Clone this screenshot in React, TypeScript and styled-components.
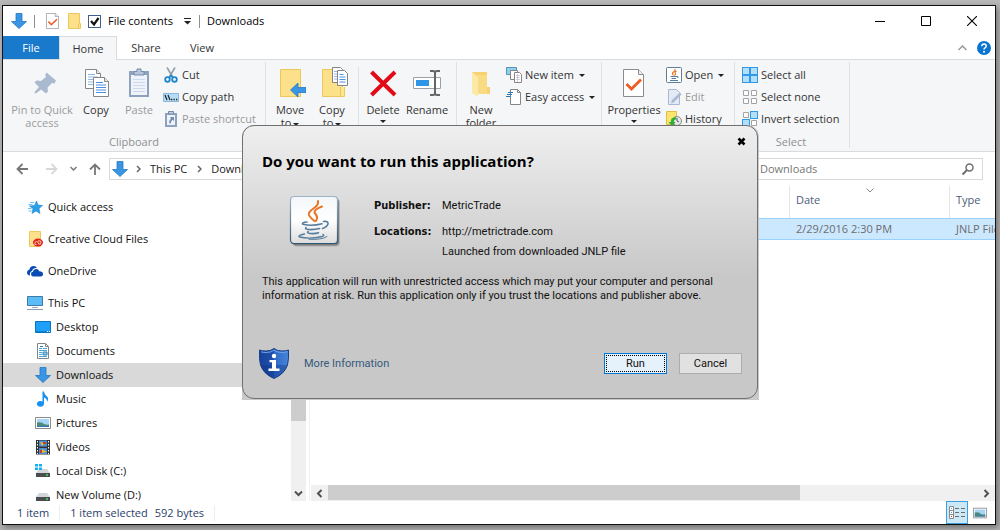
import React from "react";
import styled, { createGlobalStyle } from "styled-components";

const GlobalStyle = createGlobalStyle`
  *, *::before, *::after { box-sizing: border-box; }
  html, body { margin: 0; padding: 0; }
  body {
    background: #b4b4b4;
    font-family: "Open Sans", "Noto Sans", sans-serif;
    font-size: 11px;
    line-height: 16px;
    color: #1a1a1a;
    overflow: hidden;
  }
  button, input { font: inherit; color: inherit; }
  button { border: 0; background: none; padding: 0; margin: 0; }
  svg { display: block; flex: none; }
`;

/* ---------- window ---------- */
const Desktop = styled.div`
  display: flex;
  height: 100vh;
  padding: 5px 4px 5px 2px;
  background: linear-gradient(#b9b9b9, #b0b0b0);
`;
const Window = styled.div`
  flex: 1;
  min-width: 0;
  display: flex;
  flex-direction: column;
  background: #fff;
  border: 1px solid #111;
  box-shadow: 2px 2px 6px rgba(0, 0, 0, 0.4);
`;
const TitleBar = styled.header`
  display: flex;
  align-items: center;
  height: 30px;
  flex: none;
  padding-left: 8px;
`;
const QuickTools = styled.div`
  display: flex;
  align-items: center;
  color: #000;
`;
const ToolSep = styled.span<{ $left: number; $right: number }>`
  width: 1px;
  height: 13px;
  margin: 0 ${(p) => p.$right}px 0 ${(p) => p.$left}px;
  background: #8f8f8f;
`;
const CheckLabel = styled.label`
  display: flex;
  align-items: center;
  gap: 7px;
  margin-left: 7px;
`;
const CheckBox = styled.input`
  appearance: none;
  width: 13px;
  height: 13px;
  margin: 0;
  border: 1px solid #3f5f8f;
  background: #fff url("data:image/svg+xml,%3Csvg xmlns='http://www.w3.org/2000/svg' viewBox='0 0 11 11'%3E%3Cpath d='M2 5l3 3.5L9.500 2' fill='none' stroke='%23111' stroke-width='2.2'/%3E%3C/svg%3E");
`;
const IconButton = styled.button<{ $left?: number }>`
  margin-left: ${(p) => p.$left ?? 0}px;
`;
const WindowButtons = styled.div`
  display: flex;
  margin-left: auto;
`;
const WindowButton = styled.button`
  width: 46px;
  height: 28px;
  display: flex;
  align-items: center;
  justify-content: center;
`;

/* ---------- tabs ---------- */
const TabBar = styled.nav`
  display: flex;
  flex: none;
  height: 24px;
  border-bottom: 1px solid #dadbdc;
`;
const Tab = styled.button<{ $kind?: "file" | "active" }>`
  width: ${(p) => (p.$kind === "active" ? 58 : 56)}px;
  height: ${(p) => (p.$kind === "active" ? 24 : 23)}px;
  margin-right: ${(p) => (p.$kind === "active" ? 1 : 0)}px;
  color: ${(p) => (p.$kind === "file" ? "#fff" : "#333")};
  background: ${(p) =>
    p.$kind === "file" ? "#1979ca" : p.$kind === "active" ? "#f5f6f7" : "none"};
  border: ${(p) => (p.$kind === "active" ? "1px solid #dadbdc" : "0")};
  border-bottom: 0;
`;
const HelpArea = styled.div`
  display: flex;
  align-items: center;
  gap: 10px;
  margin-left: auto;
  padding-right: 4px;
`;

/* ---------- ribbon ---------- */
const Ribbon = styled.div`
  display: flex;
  flex: none;
  height: 92px;
  padding: 2px 0 3px;
  background: #f5f6f7;
  border-bottom: 1px solid #dadbdc;
`;
const Group = styled.section<{ $width: number; $left: number }>`
  display: flex;
  flex-direction: column;
  justify-content: space-between;
  width: ${(p) => p.$width}px;
  padding-left: ${(p) => p.$left}px;
  border-right: 1px solid #e0e1e3;
`;
const GroupRow = styled.div<{ $gap?: number }>`
  display: flex;
  align-items: flex-start;
  gap: ${(p) => p.$gap ?? 0}px;
  padding-top: 2px;
`;
const GroupLabel = styled.div<{ $shift: number }>`
  padding-right: ${(p) => p.$shift}px;
  text-align: center;
  line-height: 12px;
  color: #8f8f8f;
`;
const BigButton = styled.button<{ $width: number; $off?: boolean }>`
  display: flex;
  flex-direction: column;
  align-items: center;
  gap: 4px;
  width: ${(p) => p.$width}px;
  padding-top: 3px;
  line-height: 13px;
  color: ${(p) => (p.$off ? "#9a9a9a" : "#333")};
`;
const SmallColumn = styled.div`
  display: flex;
  flex-direction: column;
`;
const SmallButton = styled.button<{ $off?: boolean }>`
  display: flex;
  align-items: center;
  gap: 3px;
  height: 22px;
  padding-left: 1px;
  white-space: nowrap;
  color: ${(p) => (p.$off ? "#9a9a9a" : "#333")};
`;
const InnerSep = styled.span`
  width: 1px;
  height: 66px;
  margin: 3px 3px 0 5px;
  background: #e0e1e3;
`;
const Caret = styled.span`
  display: inline-block;
  width: 0;
  margin-left: 2px;
  border: 3px solid transparent;
  border-top-color: #222;
  border-bottom: 0;
  vertical-align: middle;
`;
const CaretLine = styled(Caret)`
  display: block;
  margin: 4px auto 0;
`;

/* ---------- navigation row ---------- */
const NavRow = styled.div`
  display: flex;
  align-items: center;
  flex: none;
  height: 34px;
  padding: 0 12px 0 13px;
`;
const NavButtons = styled.div`
  display: flex;
  align-items: center;
  width: 93px;
  gap: 12px;
`;
const Address = styled.div`
  display: flex;
  align-items: center;
  flex: 1;
  height: 22px;
  padding-left: 2px;
  border: 1px solid #d9d9d9;
`;
const Crumb = styled.a`
  margin: 0 10px 0 9px;
  color: #1a1a1a;
  text-decoration: none;
`;
const SearchBox = styled.label`
  display: flex;
  align-items: center;
  width: 246px;
  height: 22px;
  margin-left: 12px;
  padding: 0 7px 0 22px;
  border: 1px solid #d9d9d9;
`;
const SearchInput = styled.input`
  flex: 1;
  min-width: 0;
  padding: 0;
  border: 0;
  outline: 0;
  background: none;
  &::placeholder { color: #767676; opacity: 1; }
`;

/* ---------- body ---------- */
const Body = styled.div`
  display: flex;
  flex: 1;
  min-height: 0;
`;
const Sidebar = styled.aside`
  display: flex;
  width: 307px;
  border-right: 1px solid #f0f0f0;
  padding-right: 3px;
`;
const Tree = styled.ul`
  flex: 1;
  margin: 0;
  padding: 9px 0 0;
  list-style: none;
  overflow: hidden;
`;
const TreeItem = styled.li<{ $child?: boolean; $active?: boolean }>`
  height: 24px;
  margin-bottom: ${(p) => (p.$child ? 0 : 8)}px;
  background: ${(p) => (p.$active ? "#d9d9d9" : "none")};
  &:has(+ li[data-child="true"]) { margin-bottom: 0; }
`;
const TreeLink = styled.a<{ $child?: boolean }>`
  display: flex;
  align-items: center;
  gap: 5px;
  height: 24px;
  padding-left: ${(p) => (p.$child ? 32 : 24)}px;
  color: #111;
  text-decoration: none;
`;
const VScroll = styled.div`
  display: flex;
  flex-direction: column;
  align-items: center;
  justify-content: flex-end;
  width: 15px;
  background: #f0f0f0;
`;
const VThumb = styled.div`
  align-self: stretch;
  height: 160px;
  margin-bottom: 64px;
  background: #cdcdcd;
`;
const VArrow = styled.button`
  height: 16px;
`;
const Content = styled.main`
  display: flex;
  flex-direction: column;
  justify-content: space-between;
  flex: 1;
  min-width: 0;
  padding-left: 1px;
`;
const FileTable = styled.table`
  width: 100%;
  table-layout: fixed;
  border-collapse: separate;
  border-spacing: 0;
  color: #6d6d6d;
`;
const HeadCell = styled.th<{ $width?: number }>`
  position: relative;
  width: ${(p) => (p.$width ? `${p.$width}px` : "auto")};
  height: 32px;
  padding: 0 0 4px 6px;
  font-weight: 400;
  text-align: left;
  color: #4c607a;
  border-left: ${(p) => (p.$width ? "1px solid #e5e5e5" : "0")};
`;
const SortMark = styled.span`
  position: absolute;
  top: 2px;
  left: 50%;
  margin-left: -4px;
`;
const Cell = styled.td`
  height: 22px;
  padding: 0 0 0 7px;
  background: #cce8ff;
  border: 1px solid #99d1ff;
  border-width: 1px 0;
  white-space: nowrap;
  overflow: hidden;
`;
const HScroll = styled.div`
  display: flex;
  align-items: center;
  height: 16px;
  padding: 0 5px;
  background: #f0f0f0;
`;
const HThumb = styled.div`
  width: 70%;
  height: 15px;
  margin: 0 auto 1px 5px;
  background: #cdcdcd;
`;
const StatusBar = styled.footer`
  display: flex;
  align-items: center;
  flex: none;
  height: 23px;
  padding-left: 14px;
  color: #2c3e6b;
`;
const StatusText = styled.span<{ $sep?: boolean }>`
  padding-right: ${(p) => (p.$sep ? 10 : 7)}px;
  margin-right: ${(p) => (p.$sep ? 10 : 0)}px;
  border-right: ${(p) => (p.$sep ? "1px solid #ededed" : "0")};
`;
const ViewButton = styled.button<{ $active?: boolean }>`
  display: flex;
  align-items: center;
  justify-content: center;
  width: 22px;
  height: 23px;
  margin-right: 1px;
  background: ${(p) => (p.$active ? "#cce8f6" : "none")};
  border: 1px solid ${(p) => (p.$active ? "#3a9fdc" : "transparent")};
`;
const ViewButtons = styled.div`
  display: flex;
  margin-left: auto;
  padding-right: 3px;
`;

/* ---------- dialog ---------- */
const DialogFrame = styled.div`
  position: absolute;
  top: 125px;
  left: 242px;
  width: 517px;
  padding: 0 1px 1px 0;
  background: #c9c9c9;
  border-radius: 12px 12px 0 0;
`;
const Dialog = styled.section`
  display: flex;
  flex-direction: column;
  height: 274px;
  padding: 9px 15px 19px 16px;
  border: 1px solid #707070;
  border-radius: 12px;
  background: linear-gradient(#efefef, #c8c8c8 150px);
  color: #111;
  font-family: Roboto, "Open Sans", sans-serif;
  line-height: 14px;
`;
const CloseDialog = styled.button`
  align-self: flex-end;
  margin-right: -6px;
  padding: 2px;
`;
const DialogTitle = styled.h1`
  margin: 2px 0 0 3px;
  font-family: "Open Sans", sans-serif;
  font-size: 15px;
  line-height: 22px;
  font-weight: 700;
  color: #000;
`;
const AppInfo = styled.div`
  display: flex;
  gap: 36px;
  margin: 24px 0 0 31px;
`;
const Facts = styled.dl`
  display: grid;
  grid-template-columns: 68px auto;
  grid-template-rows: 26px 20px 20px;
  margin: 3px 0 0;
`;
const Term = styled.dt`
  font-family: "DejaVu Sans Condensed", "Open Sans", sans-serif;
  font-weight: 700;
  white-space: nowrap;
`;
const Value = styled.dd`
  margin: 0;
  grid-column: 2;
`;
const Warning = styled.p`
  margin: 10px 0 0 3px;
  white-space: nowrap;
`;
const DialogFooter = styled.div`
  display: flex;
  align-items: center;
  margin-top: auto;
`;
const MoreLink = styled.a`
  margin-left: 15px;
  margin-right: auto;
  color: #35587c;
  text-decoration: none;
`;
const DialogButton = styled.button<{ $primary?: boolean }>`
  width: 63px;
  height: 21px;
  margin-left: ${(p) => (p.$primary ? 0 : 12)}px;
  background: ${(p) => (p.$primary ? "#e5f1fb" : "#e1e1e1")};
  border: 1px solid ${(p) => (p.$primary ? "#0078d7" : "#adadad")};
  outline: ${(p) => (p.$primary ? "1px dotted #000" : "none")};
  outline-offset: -3px;
`;

/* ---------- icons ---------- */
const DownArrow = () => (
  <svg width="16" height="16" viewBox="0 0 16 16">
    <path d="M5 .5h6v8h4.500L8 15.500.5 8.500H5z" fill="#3a95e4" stroke="#2478c2" strokeWidth=".8" />
  </svg>
);
const CheckPage = ({ w = 13, h = 16 }: { w?: number; h?: number }) => (
  <svg width={w} height={h} viewBox="0 0 22 28" preserveAspectRatio="none">
    <path d="M.7.700h15L21.300 6v21.300H.7z" fill="#fff" stroke="#8b8b8b" strokeWidth="1.200" />
    <path d="M15.500.7V6.200h5.800" fill="#eee" stroke="#8b8b8b" />
    <path d="M4 15l5 5.500 9.500-9.500" fill="none" stroke="#f15a22" strokeWidth="2.800" />
  </svg>
);
const PropertiesIcon = () => (
  <svg width="32" height="32" viewBox="0 0 32 32">
    <path d="M5.500 2.500h15l5 5v22h-20z" fill="#fff" stroke="#8b8b8b" />
    <path d="M20.500 2.500v5h5" fill="#eee" stroke="#8b8b8b" />
    <path d="M8.500 17l5 5 9.500-9.500" fill="none" stroke="#f15a22" strokeWidth="2.800" />
  </svg>
);
const FolderShape = ({ w, h }: { w: number; h: number }) => (
  <svg width={w} height={h} viewBox="0 0 13 16" preserveAspectRatio="none">
    <path d="M.5.500h11v10h1v5H.5z" fill="#fce08a" stroke="#ecc85c" />
    <path d="M10.500 10.500v5" stroke="#ecc85c" />
  </svg>
);
const PinIcon = () => (
  <svg width="32" height="32" viewBox="0 0 32 32">
    <path d="M20.500 5.500L30 13.500l-1.500 3-2.500-.5-4.500 4.500.5 4-2 2-5-4-4.500 3.500-2 .5.500-2 4-4.500L8.500 15.500l2-2 4.500.5 5-4-.8-2z" fill="#a9b9cf" />
  </svg>
);
const Sheet = ({ x, y, c = "#4a90e2" }: { x: number; y: number; c?: string }) => (
  <g transform={`translate(${x} ${y})`}>
    <path d="M.5.500h11l4 4v15H.5z" fill="#fff" stroke="#858585" />
    <path d="M11.500.5v4h4" fill="#eee" stroke="#858585" />
    <path d="M3 5.500h7M3 8h10M3 10.500h10M3 13h10M3 15.500h10" stroke={c} />
  </g>
);
const CopyIcon = () => (
  <svg width="32" height="32" viewBox="0 0 32 32">
    <Sheet x={5} y={2} c="#8fb8ea" />
    <Sheet x={13} y={10} />
  </svg>
);
const PasteIcon = () => (
  <svg width="32" height="32" viewBox="0 0 32 32">
    <path d="M6 4h20v26H6z" fill="#8ea2c0" />
    <path d="M8 8h16v20H8z" fill="#f0f4fa" />
    <path d="M11 4.500h3V2h4v2.500h3V8H11z" fill="#b8c6da" stroke="#7489ab" />
    <path d="M10 12.500h12M10 15.500h12M10 18.500h12M10 21.500h12M10 24.500h12" stroke="#ccd9ec" />
  </svg>
);
const CutIcon = () => (
  <svg width="16" height="16" viewBox="0 0 16 16" fill="none">
    <path d="M4 .5l6 10M12 .5L6 10.500" stroke="#93a0ab" strokeWidth="1.600" />
    <circle cx="4.500" cy="12.500" r="2.300" stroke="#1b86cf" strokeWidth="1.800" />
    <circle cx="11.500" cy="12.500" r="2.300" stroke="#1b86cf" strokeWidth="1.800" />
    <path d="M6 11l2-2.500 2 2.500" stroke="#1b86cf" strokeWidth="1.500" />
  </svg>
);
const PathIcon = () => (
  <svg width="16" height="16" viewBox="0 0 16 16">
    <path d="M.5 4.500h15v8H.5z" fill="#b4dcfa" stroke="#8ab8dc" />
    <path d="M2 6l2 5M5 6l2 5" stroke="#222" strokeWidth="1.200" />
    <path d="M8 10.500h1.300M10.500 10.500h1.300M13 10.500h1.300" stroke="#222" strokeWidth="1.300" />
  </svg>
);
const ShortcutIcon = () => (
  <svg width="16" height="16" viewBox="0 0 16 16">
    <path d="M2 2h12v14H2z" fill="#8ea2c0" />
    <path d="M4 4h8v10H4z" fill="#eef3fa" />
    <path d="M5.500.5h5V3h-5z" fill="#c3cfe0" stroke="#7489ab" />
    <path d="M7 6h4v4L9.500 8.800Q8 10 7.500 12.500L6 12q0-3 2-4.500z" fill="#7489ab" />
  </svg>
);
const MoveIcon = () => (
  <svg width="32" height="32" viewBox="0 0 32 32">
    <path d="M6.500 2.500h20v27h-20z" fill="#fce08a" stroke="#ecc85c" />
    <path d="M23.500 20v9.500h3V20" fill="#fce694" stroke="#ecc85c" />
    <path d="M16.500 23l7.500-7v4.500h8v5h-8V30z" fill="#3a95e4" stroke="#2478c2" strokeWidth=".8" />
  </svg>
);
const CopyToIcon = () => (
  <svg width="32" height="32" viewBox="0 0 32 32">
    <path d="M6.500 2.500h20v27h-20z" fill="#fce08a" stroke="#ecc85c" />
    <path d="M24.500 20v9.500h4V20" fill="#fce694" stroke="#ecc85c" />
    <g transform="translate(16 0)">
      <path d="M.5.500h8l2 2v13H.5z" fill="#fff" stroke="#858585" />
      <path d="M2 4.500h5M2 7h5M2 9.500h5M2 12h5" stroke="#8fb8ea" />
      <path d="M5.500 3.500h7l3 3v12h-10z" fill="#fff" stroke="#858585" />
      <path d="M7.500 7.500h4M7.500 10h6M7.500 12.500h6M7.500 15h6" stroke="#4a90e2" />
    </g>
  </svg>
);
const DeleteIcon = () => (
  <svg width="32" height="32" viewBox="0 0 32 32">
    <path d="M4.500 5l23.500 23M28 5L4.500 28" stroke="#e20a16" strokeWidth="4" />
  </svg>
);
const RenameIcon = () => (
  <svg width="32" height="32" viewBox="0 0 32 32" fill="none">
    <path d="M2.500 10.500h27v11h-27z" fill="#fff" stroke="#9aa0a6" />
    <path d="M5 13h13v6H5z" fill="#3095e4" />
    <path d="M19 4h3q2 0 2 2 0-2 2-2h3M19 28h3q2 0 2-2 0 2 2 2h3M24 6v20" stroke="#666" strokeWidth="2" />
  </svg>
);
const NewFolderIcon = () => (
  <svg width="32" height="32" viewBox="0 0 32 32">
    <path d="M7 5h15v15h3v7H9L7 26z" fill="#f6d272" />
    <path d="M12 8h10v19H12z" fill="#f8db82" />
    <path d="M7 5l6 5v20l-6-4z" fill="#fde9a6" />
  </svg>
);
const NewItemIcon = () => (
  <svg width="16" height="16" viewBox="0 0 16 16">
    <path d="M.5.500h10v7H.5z" fill="#8fd0ee" stroke="#5a93b0" />
    <path d="M4.500 3.500h7v9h-7z" fill="#fff" stroke="#858585" />
    <path d="M8.500 5.500h5l2 2v8h-7z" fill="#fff" stroke="#858585" />
    <path d="M10 8.500h4M10 10.500h4M10 12.500h4" stroke="#c5d5ec" />
    <path d="M11.500 7v8" stroke="#f29b9b" strokeWidth=".6" />
  </svg>
);
const EasyIcon = () => (
  <svg width="16" height="16" viewBox="0 0 16 16">
    <path d="M4.500.500h7l3 3v12h-10z" fill="#fff" stroke="#858585" />
    <path d="M11.500.5v3h3" fill="none" stroke="#858585" />
    <path d="M2 3.500h5M1 5.500h5M0 7.500h5" stroke="#2878b8" />
  </svg>
);
const JavaGlyph = () => (
  <g fill="none" strokeLinecap="round">
    <path d="M28 5Q29 9 23.500 12.500 18 16 19 19 20 21.500 24.500 25" stroke="#ea7322" strokeWidth="2" />
    <path d="M32 10.500Q24 13.500 24.500 16.500 27.500 20 27 22.500L26 25" stroke="#ea7322" strokeWidth="2" />
    <path d="M17 26Q11 26.500 13 28.300 22 30.500 32 27.800" stroke="#557d9d" strokeWidth="1.600" />
    <path d="M33.500 25.500Q38.500 24.800 38 28 37 31 32.500 32.500" stroke="#557d9d" strokeWidth="1.600" />
    <path d="M16 31.500Q14.500 33 18 33.500 24 34 29.500 32.500" stroke="#557d9d" strokeWidth="1.600" />
    <path d="M18 35.500Q16.500 37 20 37.500 25 38 28.500 36.800" stroke="#557d9d" strokeWidth="1.600" />
    <path d="M14.500 38Q7 39.500 9.500 41 20 43.500 32 40.500 35 39.500 33 38.500" stroke="#557d9d" strokeWidth="1.400" />
    <path d="M19 43.300Q32 44 37 40.500" stroke="#557d9d" strokeWidth="1" />
  </g>
);
const JavaTile = () => (
  <svg width="48" height="48" viewBox="0 0 48 48" overflow="visible">
    <defs>
      <linearGradient id="tile" x2="0" y2="1">
        <stop offset="0" stopColor="#f3f6f9" />
        <stop offset=".5" stopColor="#fff" />
        <stop offset="1" stopColor="#dcdcdc" />
      </linearGradient>
      <linearGradient id="tileEdge" x2="0" y2="1">
        <stop offset="0" stopColor="#9db4c8" />
        <stop offset="1" stopColor="#2f5673" />
      </linearGradient>
    </defs>
    <rect x="3" y="3" width="47" height="47.500" rx="4" fill="#000" opacity=".15" />
    <rect x="2" y="2" width="47" height="47.500" rx="4" fill="#000" opacity=".3" />
    <rect x=".5" y=".5" width="47" height="47" rx="3.500" fill="url(#tile)" stroke="url(#tileEdge)" strokeWidth="1.200" />
    <JavaGlyph />
  </svg>
);
const JavaSmall = () => (
  <svg width="16" height="16" viewBox="0 0 16 16" fill="none">
    <rect x=".5" y=".5" width="15" height="15" rx="1" fill="#fff" stroke="#5f7f98" />
    <path d="M9 2Q9.500 4 7.500 5T7.500 8.500M10.500 4Q8.500 5 9.300 6.200T8.500 8.500" stroke="#ea7322" strokeWidth="1.200" />
    <path d="M4.500 9.500h6.500q2 0 .5 1.500M5.500 11.500h4.500M4 13.500h8" stroke="#557d9d" />
  </svg>
);
const EditIcon = () => (
  <svg width="16" height="16" viewBox="0 0 16 16">
    <path d="M2.500.500h8l3 3v12h-11z" fill="#e3eaf5" stroke="#a9b8d0" />
    <path d="M5 14.500l1-3.500 8-7.500 1.500 2-8 8z" fill="#a9b9d2" />
  </svg>
);
const HistoryIcon = () => (
  <svg width="16" height="16" viewBox="0 0 16 16">
    <path d="M.5.500h10v13H.5z" fill="#fce56c" stroke="#e3bd44" />
    <circle cx="11" cy="10" r="4.500" fill="#e8e8e8" stroke="#8a8a8a" />
    <path d="M11 7v3l2 1" fill="none" stroke="#555" />
    <path d="M10 6Q4 6.500 5 11H2.500L6.500 15.500 9.500 11H8q-.5-2 2-2.500z" fill="#2fae3a" />
  </svg>
);
const SelectIcon = ({ on }: { on: number[] }) => (
  <svg width="16" height="16" viewBox="0 0 16 16">
    {[[0, 0], [8, 0], [0, 8], [8, 8]].map(([x, y], i) =>
      on.includes(i) ? (
        <g key={i}>
          <path d={`M${x} ${y}h8v8h-8z`} fill="#3298e8" />
          <path d={`M${x + 1} ${y + 1}h6v6h-6z`} fill="#b4dffb" />
        </g>
      ) : (
        <path key={i} d={`M${x + 1.5} ${y + 1.5}h5v5h-5z`} fill="#fff" stroke="#a3a3a3" />
      )
    )}
  </svg>
);
const HelpIcon = () => (
  <svg width="14" height="14" viewBox="0 0 14 14">
    <circle cx="7" cy="7" r="7" fill="#0b74d1" />
    <path d="M4.800 5.300q0-2.200 2.200-2.200t2.200 1.900q0 1.200-1.200 1.800-1 .6-1 1.600" fill="none" stroke="#fff" strokeWidth="1.500" />
    <circle cx="7" cy="10.700" r="1" fill="#fff" />
  </svg>
);
const Chevron = ({ d, c = "#666", s = 1.5, w = 8, h = 8 }: { d: string; c?: string; s?: number; w?: number; h?: number }) => (
  <svg width={w} height={h} viewBox={`0 0 ${w} ${h}`}>
    <path d={d} fill="none" stroke={c} strokeWidth={s} />
  </svg>
);
const StarIcon = () => (
  <svg width="16" height="16" viewBox="0 0 16 16">
    <path d="M9.500 2l1.500 4 4.500.5-3.500 3 1 5-4-2.500L5 14.500l1-5L2.500 7l5-.5z" fill="#2aa0e8" stroke="#1b86cf" strokeWidth=".6" />
    <path d="M3 3.500h4M1.500 5.500h4M1 9.500h3.500M1.500 12h3" stroke="#69bdf0" />
  </svg>
);
const CloudFolderIcon = () => (
  <svg width="16" height="16" viewBox="0 0 16 16">
    <path d="M2.500.500h11v15h-11z" fill="#fce08a" stroke="#ecc85c" />
    <ellipse cx="11" cy="11.500" rx="5" ry="4" fill="#e0251b" />
    <path d="M8 12.500q0-2 1.500-2t2.500 2.500M9.500 13.500q-2 .5-2-1M11 10q3-1 3 1.500t-2.500 1.500" fill="none" stroke="#fce0c8" strokeWidth=".9" />
  </svg>
);
const OneDriveIcon = () => (
  <svg width="16" height="16" viewBox="0 0 16 16">
    <path d="M3 12.500Q0 12 0 9.500t2.500-3Q3 3 6.500 3q2.500 0 3.500 2-4-.5-5 3-2.500.5-2 4.500z" fill="#0a4bb3" />
    <path d="M6 13.500q-2-.3-2-2.500t2-2.300Q6.500 6 9.300 6q2.200 0 3 2.300 3.700.2 3.700 2.700t-2.500 2.500z" fill="#0a4bb3" />
  </svg>
);
const PcIcon = () => (
  <svg width="16" height="16" viewBox="0 0 16 16">
    <path d="M.5 1.500h15v9H.5z" fill="#5cbcf5" stroke="#3f7ba5" />
    <path d="M5 12.500h6" stroke="#9ab" />
    <path d="M0 14.500h16" stroke="#8a9aa8" />
  </svg>
);
const DesktopIcon = () => (
  <svg width="16" height="16" viewBox="0 0 16 16">
    <path d="M.5 2.500h15v11H.5z" fill="#1ea0fa" stroke="#0b74c0" />
    <path d="M1 12.500h11" stroke="#0b84d8" />
    <path d="M12 12.500h1m1 0h1" stroke="#fff" />
  </svg>
);
const DocIcon = () => (
  <svg width="16" height="16" viewBox="0 0 16 16">
    <path d="M2.500.500h8l3 3v12h-11z" fill="#fff" stroke="#858585" />
    <path d="M10.500.5v3h3" fill="none" stroke="#858585" />
    <path d="M4 5.500h3M8 5.500h4M4 7.500h8M4 9.500h3M4 11.500h3M4 13.500h8" stroke="#4aa5d8" />
    <path d="M5 3.500h3M8 9h4v3H8z" stroke="#3584b0" fill="#8ec6e6" />
  </svg>
);
const MusicIcon = () => (
  <svg width="16" height="16" viewBox="0 0 16 16">
    <path d="M7.500.500H9q.3 3 2.500 4.500 3 2.500.5 6 .3-3.500-3-4.500v6.200q-.3 3-3.500 3T2 13t3.300-3q1.200 0 2.200.5z" fill="#1592ee" />
  </svg>
);
const PictureIcon = ({ w = 16 }: { w?: number }) => (
  <svg width={w} height={w} viewBox="0 0 16 16">
    <path d="M.5 2.500h15v11H.5z" fill="#fff" stroke="#8b8b8b" />
    <path d="M2 4h12v8H2z" fill="#a8d4f5" />
    <path d="M2 7.500q5-1 7 1.500 3 1 5 .5V12H2z" fill="#4d8a7c" />
    <path d="M2 11h12v1H2z" fill="#3b75ad" />
  </svg>
);
const VideoIcon = () => (
  <svg width="16" height="16" viewBox="0 0 16 16">
    <path d="M1 1h14v14.500H1z" fill="#333" />
    <path d="M4 1.500h8v6H4zM4 9h8v6H4z" fill="#4a8fd6" />
    <path d="M5 3l5 1-3 3zM7 10l5 3-6 1z" fill="#e8b93a" />
    <path d="M8 3h3v2H8zM5 11h2v3H5z" fill="#b8412a" />
    <path d="M2.500 2v13M13.500 2v13" stroke="#fff" strokeDasharray="1.500 1.500" />
  </svg>
);
const DiskIcon = ({ win }: { win?: boolean }) => (
  <svg width="16" height="16" viewBox="0 0 16 16">
    <path d="M4 6h8l3 4H1z" fill="#d3d6d9" />
    <path d="M1 10h14v4H1z" fill="#4a4d50" />
    <path d="M11 12h2" stroke="#4ee04e" strokeWidth="1.500" />
    {win && <path d="M0 1h3v2.500H0zM4 1h3v2.500H4zM0 4.500h3V7H0zM4 4.500h3V7H4z" fill="#12b0f0" />}
  </svg>
);
const SearchIcon = () => (
  <svg width="14" height="14" viewBox="0 0 14 14" fill="none" stroke="#6f6f6f">
    <circle cx="8.500" cy="5.500" r="3.500" strokeWidth="1.500" />
    <path d="M6 8L1.500 12.500" strokeWidth="2" />
  </svg>
);
const ShieldIcon = () => (
  <svg width="30" height="31" viewBox="0 0 30 31">
    <defs>
      <linearGradient id="shield" x2="1" y2="0">
        <stop offset="0" stopColor="#17429a" />
        <stop offset=".5" stopColor="#1f50ae" />
        <stop offset=".5" stopColor="#2f68c6" />
        <stop offset="1" stopColor="#4585da" />
      </linearGradient>
    </defs>
    <path d="M15 .5Q12 3 7 3 3 3 .5 2q-.5 9 1 15 3 9 13.500 13.500Q25.500 26 28.500 17q1.500-6 1-15-2.500 1-6.500 1-5 0-8-2.500z" fill="url(#shield)" stroke="#1a3f86" />
    <path d="M1.500 17h27Q25.500 26 15 30 4.500 26 1.500 17z" fill="#0f3484" opacity=".4" />
    <path d="M15 2.200Q12 4.500 7 4.500q-3 0-5-.7M15 2.200q3 2.300 8 2.300 3 0 5-.7" fill="none" stroke="#6fa5ec" strokeWidth="1" />
    <circle cx="15" cy="8" r="2.200" fill="#fff" />
    <path d="M10.500 12H17v8.500h3.500v2.500h-11v-2.500H13V14.300h-2.500z" fill="#fff" />
  </svg>
);
const DetailsIcon = () => (
  <svg width="16" height="13" viewBox="0 0 16 13" fill="none">
    <path d="M.5.500h4v12h-4zM.5 4.500h4M.5 8.500h4" fill="#fff" stroke="#8a8a8a" />
    <path d="M2 2.500h1M2 6.500h1" stroke="#4aa5d8" />
    <path d="M2 10.500h1" stroke="#d22" />
    <path d="M6 2.500h4M12 2.500h4M6 6.500h4M12 6.500h4M6 10.500h4M12 10.500h4" stroke="#6d6d6d" />
  </svg>
);

const tree: { label: string; icon: React.ReactNode; child?: boolean; active?: boolean }[] = [
  { label: "Quick access", icon: <StarIcon /> },
  { label: "Creative Cloud Files", icon: <CloudFolderIcon /> },
  { label: "OneDrive", icon: <OneDriveIcon /> },
  { label: "This PC", icon: <PcIcon /> },
  { label: "Desktop", icon: <DesktopIcon />, child: true },
  { label: "Documents", icon: <DocIcon />, child: true },
  { label: "Downloads", icon: <DownArrow />, child: true, active: true },
  { label: "Music", icon: <MusicIcon />, child: true },
  { label: "Pictures", icon: <PictureIcon />, child: true },
  { label: "Videos", icon: <VideoIcon />, child: true },
  { label: "Local Disk (C:)", icon: <DiskIcon win />, child: true },
  { label: "New Volume (D:)", icon: <DiskIcon />, child: true },
];

export default function App() {
  return (
    <Desktop>
      <GlobalStyle />
      <Window>
        <TitleBar>
          <QuickTools>
            <DownArrow />
            <ToolSep $left={7} $right={11} />
            <IconButton aria-label="Properties"><CheckPage /></IconButton>
            <IconButton $left={9} aria-label="New folder"><FolderShape w={13} h={16} /></IconButton>
            <CheckLabel>
              <CheckBox type="checkbox" defaultChecked />
              File contents
            </CheckLabel>
            <IconButton $left={11} aria-label="Customize toolbar">
              <svg width="7" height="7" viewBox="0 0 7 7"><path d="M0 .5h7" stroke="#222" /><path d="M0 3h7L3.500 6.500z" fill="#222" /></svg>
            </IconButton>
            <ToolSep $left={8} $right={7} />
            <span>Downloads</span>
          </QuickTools>
          <WindowButtons>
            <WindowButton aria-label="Minimize"><Chevron w={10} h={10} d="M0 5.500h10" c="#000" s={1} /></WindowButton>
            <WindowButton aria-label="Maximize"><Chevron w={10} h={10} d="M.5.500h9v9h-9z" c="#000" s={1} /></WindowButton>
            <WindowButton aria-label="Close"><Chevron w={10} h={10} d="M0 0l10 10M10 0L0 10" c="#000" s={1.1} /></WindowButton>
          </WindowButtons>
        </TitleBar>

        <TabBar>
          <Tab $kind="file">File</Tab>
          <Tab $kind="active">Home</Tab>
          <Tab>Share</Tab>
          <Tab>View</Tab>
          <HelpArea>
            <IconButton aria-label="Collapse ribbon"><Chevron w={9} h={6} d="M.5 5L4.500 1l4 4" c="#999" /></IconButton>
            <IconButton aria-label="Help"><HelpIcon /></IconButton>
          </HelpArea>
        </TabBar>

        <Ribbon>
          <Group $width={263} $left={8}>
            <GroupRow $gap={3}>
              <BigButton $width={62} $off><PinIcon /><span>Pin to Quick<br />access</span></BigButton>
              <BigButton $width={40}><CopyIcon />Copy</BigButton>
              <BigButton $width={40} $off><PasteIcon />Paste</BigButton>
              <SmallColumn>
                <SmallButton><CutIcon />Cut</SmallButton>
                <SmallButton><PathIcon />Copy path</SmallButton>
                <SmallButton $off><ShortcutIcon />Paste shortcut</SmallButton>
              </SmallColumn>
            </GroupRow>
            <GroupLabel $shift={8}>Clipboard</GroupLabel>
          </Group>
          <Group $width={191} $left={3}>
            <GroupRow>
              <BigButton $width={42}><MoveIcon /><span>Move<br />to<Caret /></span></BigButton>
              <BigButton $width={42}><CopyToIcon /><span>Copy<br />to<Caret /></span></BigButton>
              <InnerSep />
              <BigButton $width={42}><DeleteIcon /><span>Delete<CaretLine /></span></BigButton>
              <BigButton $width={46}><RenameIcon />Rename</BigButton>
            </GroupRow>
          </Group>
          <Group $width={145} $left={3}>
            <GroupRow $gap={3}>
              <BigButton $width={42}><NewFolderIcon /><span>New<br />folder</span></BigButton>
              <SmallColumn>
                <SmallButton><NewItemIcon />New item<Caret /></SmallButton>
                <SmallButton><EasyIcon />Easy access<Caret /></SmallButton>
              </SmallColumn>
            </GroupRow>
          </Group>
          <Group $width={133} $left={2}>
            <GroupRow $gap={1}>
              <BigButton $width={60}><PropertiesIcon /><span>Properties<CaretLine /></span></BigButton>
              <SmallColumn>
                <SmallButton><JavaSmall />Open<Caret /></SmallButton>
                <SmallButton $off><EditIcon />Edit</SmallButton>
                <SmallButton><HistoryIcon />History</SmallButton>
              </SmallColumn>
            </GroupRow>
          </Group>
          <Group $width={115} $left={6}>
            <GroupRow>
              <SmallColumn>
                <SmallButton><SelectIcon on={[0, 1, 2, 3]} />Select all</SmallButton>
                <SmallButton><SelectIcon on={[]} />Select none</SmallButton>
                <SmallButton><SelectIcon on={[1, 2]} />Invert selection</SmallButton>
              </SmallColumn>
            </GroupRow>
            <GroupLabel $shift={8}>Select</GroupLabel>
          </Group>
        </Ribbon>

        <NavRow>
          <NavButtons>
            <IconButton aria-label="Back"><Chevron w={13} h={12} d="M6.500 1L1.500 6l5 5M1.500 6H12" c="#777" s={1.8} /></IconButton>
            <IconButton $left={4} aria-label="Forward"><Chevron w={13} h={12} d="M6.500 1l5 5-5 5M11.500 6H1" c="#d8d8d8" s={1.8} /></IconButton>
            <IconButton aria-label="Recent locations"><Chevron w={7} h={6} d="M.5 1l3 3 3-3" c="#777" /></IconButton>
            <IconButton aria-label="Up"><Chevron w={12} h={13} d="M1 6.500l5-5 5 5M6 1.500V12" c="#777" s={1.8} /></IconButton>
          </NavButtons>
          <Address>
            <DownArrow />
            <IconButton $left={8} aria-label="Expand"><Chevron w={5} h={8} d="M1 1l3 3-3 3" /></IconButton>
            <Crumb href="#pc">This PC</Crumb>
            <IconButton aria-label="Expand This PC"><Chevron w={5} h={8} d="M1 1l3 3-3 3" /></IconButton>
            <Crumb href="#downloads">Downloads</Crumb>
          </Address>
          <SearchBox>
            <SearchInput type="search" placeholder="Downloads" aria-label="Downloads" />
            <SearchIcon />
          </SearchBox>
        </NavRow>

        <Body>
          <Sidebar>
            <Tree>
              {tree.map((t) => (
                <TreeItem key={t.label} $child={t.child} $active={t.active} data-child={t.child}>
                  <TreeLink href="#" $child={t.child}>{t.icon}{t.label}</TreeLink>
                </TreeItem>
              ))}
            </Tree>
            <VScroll>
              <VThumb />
              <VArrow aria-label="Scroll down"><Chevron w={9} h={7} d="M1 1.500l3.500 3.500L8 1.500" c="#505050" s={2} /></VArrow>
            </VScroll>
          </Sidebar>
          <Content>
            <FileTable>
              <thead>
                <tr>
                  <HeadCell />
                  <HeadCell $width={160}>
                    Date
                    <SortMark><Chevron w={8} h={5} d="M.5.500l3.500 3.500L7.500.5" c="#888" s={1} /></SortMark>
                  </HeadCell>
                  <HeadCell $width={46}>Type</HeadCell>
                </tr>
              </thead>
              <tbody>
                <tr>
                  <Cell />
                  <Cell>2/29/2016 2:30 PM</Cell>
                  <Cell>JNLP File</Cell>
                </tr>
              </tbody>
            </FileTable>
            <HScroll>
              <IconButton aria-label="Scroll left"><Chevron w={7} h={9} d="M5.500 1L2 4.500 5.500 8" c="#505050" s={2} /></IconButton>
              <HThumb />
              <IconButton aria-label="Scroll right"><Chevron w={7} h={9} d="M1.500 1L5 4.500 1.500 8" c="#505050" s={2} /></IconButton>
            </HScroll>
          </Content>
        </Body>

        <StatusBar>
          <StatusText $sep>1 item</StatusText>
          <StatusText>1 item selected</StatusText>
          <StatusText $sep>592 bytes</StatusText>
          <ViewButtons>
            <ViewButton $active aria-label="Details view"><DetailsIcon /></ViewButton>
            <ViewButton aria-label="Thumbnail view"><PictureIcon w={14} /></ViewButton>
          </ViewButtons>
        </StatusBar>
      </Window>

      <DialogFrame role="dialog" aria-labelledby="dialog-title">
        <Dialog>
          <CloseDialog aria-label="Close dialog"><Chevron w={9} h={9} d="M1.500 1.500l6 6M7.500 1.500l-6 6" c="#000" s={2.6} /></CloseDialog>
          <DialogTitle id="dialog-title">Do you want to run this application?</DialogTitle>
          <AppInfo>
            <JavaTile />
            <Facts>
              <Term>Publisher:</Term>
              <Value>MetricTrade</Value>
              <Term>Locations:</Term>
              <Value>http://metrictrade.com</Value>
              <Value>Launched from downloaded JNLP file</Value>
            </Facts>
          </AppInfo>
          <Warning>
            This application will run with unrestricted access which may put your computer and personal
            <br />
            information at risk. Run this application only if you trust the locations and publisher above.
          </Warning>
          <DialogFooter>
            <ShieldIcon />
            <MoreLink href="#more">More Information</MoreLink>
            <DialogButton $primary>Run</DialogButton>
            <DialogButton>Cancel</DialogButton>
          </DialogFooter>
        </Dialog>
      </DialogFrame>
    </Desktop>
  );
}
